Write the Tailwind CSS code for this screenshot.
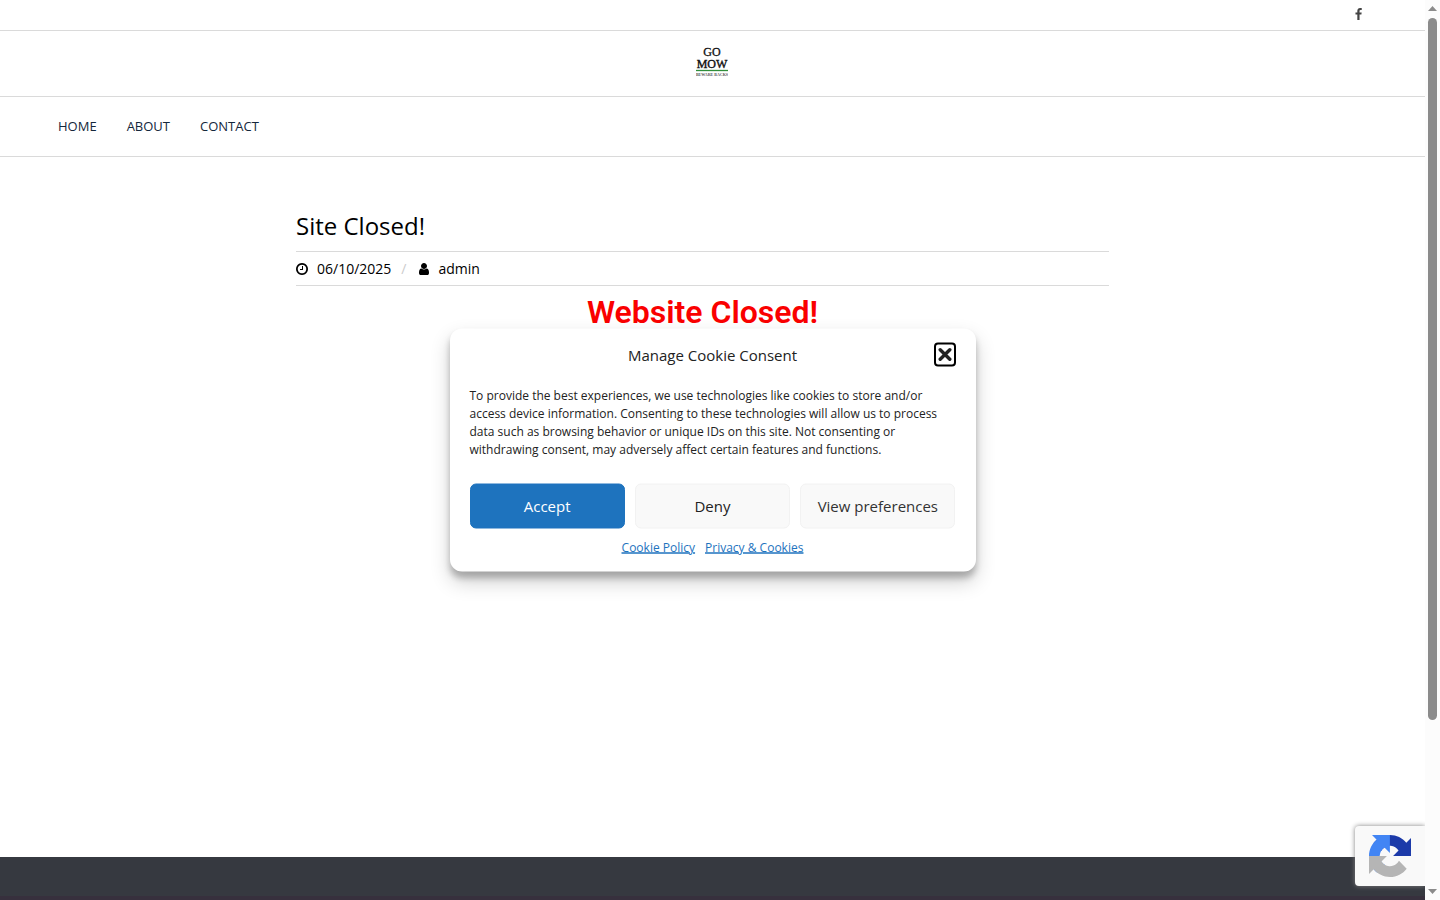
<!doctype html>
<html lang="en">
<head>
    <meta charset="UTF-8" />
    <meta name="viewport" content="width=device-width, initial-scale=1.0" />
    <title>Site Closed!</title>
    <script src="https://cdn.jsdelivr.net/npm/@tailwindcss/browser@4"></script>
</head>

<body class="flex h-screen overflow-hidden bg-white font-['Open_Sans',sans-serif] text-black">

<div class="relative flex min-w-0 flex-1 flex-col overflow-hidden">

    <!-- Top bar -->
    <div class="flex h-[31px] shrink-0 items-center justify-end border-b border-[#dadada] pr-[60px] pb-[2px]">
        <a href="#" aria-label="Facebook" class="text-[#444]">
            <svg class="h-[13px] w-[13px]" viewBox="0 0 1792 1792" fill="currentColor"><path d="M1343 12v264h-157q-86 0-116 36t-30 108v189h293l-39 296h-254v759h-306v-759h-255v-296h255v-218q0-186 104-288.5t277-102.5q147 0 228 12z"/></svg>
        </a>
    </div>

    <header class="flex h-[66px] shrink-0 items-center justify-center border-b border-[#dadada] pr-px pb-[3px]">
        <a href="#" aria-label="Go Mow">
            <svg class="h-8 w-8" viewBox="0 0 32 32" font-family="Liberation Serif, serif" text-anchor="middle">
                <text x="16" y="10" font-size="12" fill="#111" stroke="#111" stroke-width="0.3">GO</text>
                <text x="16" y="22" font-size="12" fill="#111" stroke="#111" stroke-width="0.4">MOW</text>
                <path d="M0 24.5h32" stroke="#2f8f3a" stroke-width="1.3"/>
                <text x="16" y="30" font-size="4" font-weight="bold" fill="#555">BEWARE BACKS</text>
            </svg>
        </a>
    </header>

    <nav class="flex h-[60px] shrink-0 items-center gap-[30px] border-b border-[#dadada] px-[58px] text-[13px] text-[#14273b]">
        <a href="#">HOME</a>
        <a href="#">ABOUT</a>
        <a href="#">CONTACT</a>
    </nav>

    <main class="flex flex-1 justify-center pr-5 pt-[50px]">
        <article class="w-full max-w-[813px]">
            <h1 class="text-2xl leading-[38px]">Site Closed!</h1>
            <div class="mt-[6px] flex h-[35px] items-center border-y border-[#dadada] text-sm">
                <svg class="-ml-px h-[14px] w-[14px]" viewBox="0 0 1792 1792" fill="currentColor"><path d="M1024 544v448q0 14-9 23t-23 9h-320q-14 0-23-9t-9-23v-64q0-14 9-23t23-9h224v-352q0-14 9-23t23-9h64q14 0 23 9t9 23zm416 352q0-148-73-273t-198-198-273-73-273 73-198 198-73 273 73 273 198 198 273 73 273-73 198-198 73-273zm224 0q0 209-103 385.5t-279.5 279.5-385.5 103-385.5-103-279.5-279.5-103-385.5 103-385.5 279.5-279.5 385.5-103 385.5 103 279.5 279.5 103 385.5z"/></svg>
                <a href="#" class="ml-2">06/10/2025</a>
                <span class="ml-[10px] text-[#ccc]">/</span>
                <svg class="ml-[11px] h-[14px] w-[14px]" viewBox="0 0 1792 1792" fill="currentColor"><path d="M1536 1399q0 109-62.5 187t-150.5 78h-854q-88 0-150.5-78t-62.5-187q0-85 8.5-160.5t31.5-152 58.5-131 94-89 134.5-34.5q131 128 313 128t313-128q76 0 134.5 34.5t94 89 58.5 131 31.5 152 8.5 160.5zm-256-887q0 159-112.5 271.5t-271.5 112.5-271.5-112.5-112.5-271.5 112.5-271.5 271.5-112.5 271.5 112.5 112.5 271.5z"/></svg>
                <a href="#" class="ml-[7px]">admin</a>
            </div>
            <h2 class="mt-[10px] text-center font-[Roboto,sans-serif] text-[32px] leading-8 font-semibold text-[#fa0000]">Website Closed!</h2>
        </article>
    </main>

    <footer class="h-[43px] shrink-0 border-b-4 border-[#37303d] bg-[#363940]"></footer>

    <!-- Cookie consent -->
    <div role="dialog" aria-labelledby="cookie-title" class="absolute top-1/2 left-1/2 w-[526px] -translate-x-1/2 -translate-y-1/2 rounded-xl bg-white p-5 pt-[14px] pb-[15px] text-[#222] shadow-[0_10px_20px_rgba(0,0,0,0.19),0_6px_6px_rgba(0,0,0,0.23)]">
        <div class="grid grid-cols-[1fr_auto_1fr] items-center">
            <h2 id="cookie-title" class="col-start-2 text-[15px] leading-6">Manage Cookie Consent</h2>
            <button type="button" aria-label="Close dialog" class="flex h-6 w-[22px] items-center justify-center justify-self-end rounded border-2 border-black">
                <svg class="h-[14px] w-[14px]" viewBox="0 0 14 14" fill="none" stroke="#222" stroke-width="3.4" stroke-linecap="round"><path d="M2.2 2.2l9.6 9.6M11.8 2.2l-9.6 9.6"/></svg>
            </button>
        </div>
        <p class="mt-5 text-xs leading-[18px]">To provide the best experiences, we use technologies like cookies to store and/or access device information. Consenting to these technologies will allow us to process data such as browsing behavior or unique IDs on this site. Not consenting or withdrawing consent, may adversely affect certain features and functions.</p>
        <div class="mt-[25px] grid grid-cols-3 gap-[10px] text-[15px]">
            <button type="button" class="h-[45px] rounded-md border border-[#1e73be] bg-[#1e73be] text-white">Accept</button>
            <button type="button" class="h-[45px] rounded-md border border-[#f2f2f2] bg-[#f9f9f9]">Deny</button>
            <button type="button" class="h-[45px] rounded-md border border-[#f2f2f2] bg-[#f9f9f9] text-[#333]">View preferences</button>
        </div>
        <div class="mt-[10px] flex justify-center gap-[10px] text-xs leading-[18px] text-[#1e73be] underline">
            <a href="#">Cookie Policy</a>
            <a href="#">Privacy &amp; Cookies</a>
        </div>
    </div>

    <!-- reCAPTCHA badge -->
    <div class="absolute right-0 bottom-[14px] flex h-[60px] w-[70px] items-center rounded-l-sm bg-[#f9f9f9] pl-[14px] shadow-[0_0_5px_gray]">
        <svg class="h-[42px] w-[42px]" viewBox="0 0 64 64">
            <path fill="#1c3aa9" d="M64 31.955l-.033-1.37V4.687l-7.16 7.16C50.948 4.674 42.033.093 32.05.093c-10.4 0-19.622 4.96-25.458 12.64l11.736 11.86a15.55 15.55 0 0 1 4.754-5.334c2.05-1.6 4.952-2.906 8.968-2.906.485 0 .86.057 1.135.163 4.976.393 9.288 3.14 11.828 7.124l-8.307 8.307L64 31.953"/>
            <path fill="#4285f4" d="M31.862.094l-1.37.033H4.594l7.16 7.16C4.58 13.147 0 22.06 0 32.046c0 10.4 4.96 19.622 12.64 25.458L24.5 45.768a15.55 15.55 0 0 1-5.334-4.754c-1.6-2.05-2.906-4.952-2.906-8.968 0-.485.057-.86.163-1.135.393-4.976 3.14-9.288 7.124-11.828l8.307 8.307L31.86.095"/>
            <path fill="#b5b5b5" d="M.001 32.045l.033 1.37v25.898l7.16-7.16c5.86 7.173 14.774 11.754 24.76 11.754 10.4 0 19.622-4.96 25.458-12.64l-11.736-11.86a15.55 15.55 0 0 1-4.754 5.334c-2.05 1.6-4.952 2.906-8.968 2.906-.485 0-.86-.057-1.135-.163-4.976-.393-9.288-3.14-11.828-7.124l8.307-8.307c-10.522.04-22.4.066-27.295-.005"/>
        </svg>
    </div>
</div>

<!-- Scrollbar -->
<div class="flex w-[15px] shrink-0 flex-col items-center justify-between bg-[#fcfcfc] py-[6px]" aria-hidden="true">
    <svg class="h-[5px] w-[9px] shrink-0" viewBox="0 0 9 5" fill="#8b8b8b"><path d="M4.5 0L9 5H0z"/></svg>
    <div class="my-[7px] flex-1">
        <div class="h-[702px] w-[9px] rounded-full bg-[#8b8b8b]"></div>
    </div>
    <svg class="h-[5px] w-[9px] shrink-0" viewBox="0 0 9 5" fill="#8b8b8b"><path d="M0 0h9L4.5 5z"/></svg>
</div>

</body>
</html>
